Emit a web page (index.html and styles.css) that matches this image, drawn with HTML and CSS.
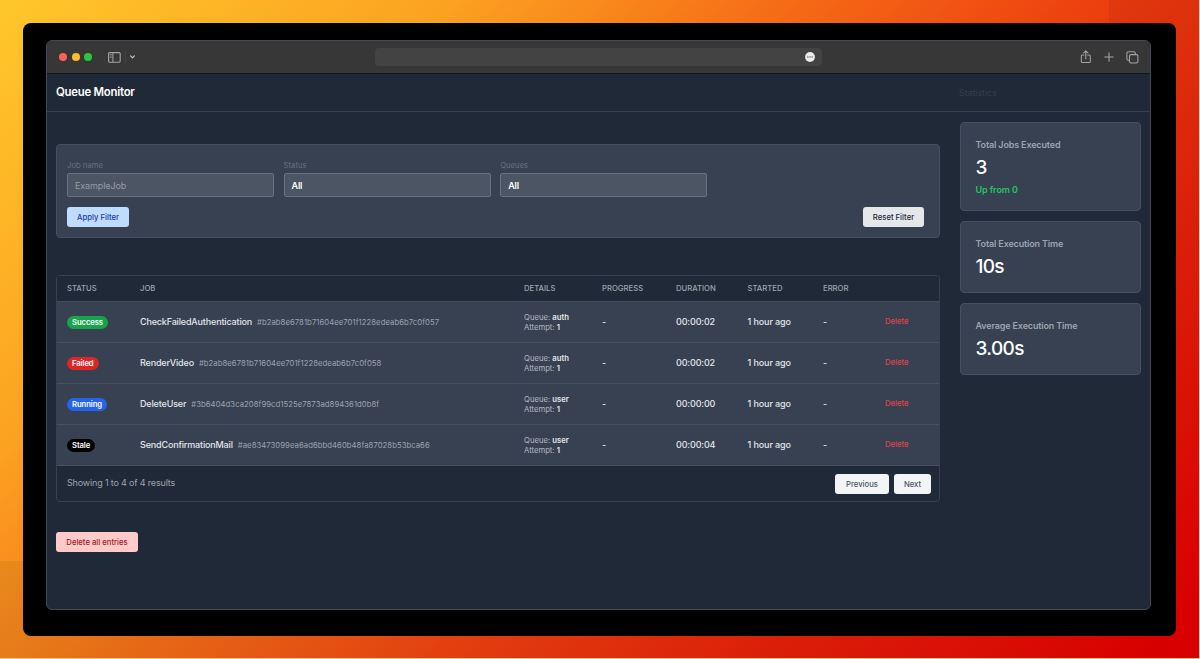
FILE: index.html
```html
<!DOCTYPE html>
<html lang="en">
<head>
<meta charset="utf-8">
<title>Queue Monitor</title>
<link rel="stylesheet" href="styles.css">
</head>
<body>
<div class="backdrop">
<div class="frame">
<div class="window">
  <div class="titlebar">
    <div class="tools-left">
      <span class="light red"></span><span class="light yellow"></span><span class="light green"></span>
      <svg class="ic-sidebar" width="13" height="11" viewBox="0 0 13 11"><rect x=".6" y=".6" width="11.6" height="9.6" rx="1.2" fill="none" stroke="#a5a5a5" stroke-width="1.1"/><path d="M4.9.6v9.6" stroke="#a5a5a5" stroke-width="1"/><path d="M1.8 2.6h1.9M1.8 4.1h1.9M1.8 5.6h1.9" stroke="#a5a5a5" stroke-width=".7"/></svg>
      <span class="divider"></span>
      <svg class="ic-chevron" width="5" height="4" viewBox="0 0 5 4"><path d="M.6.9l1.9 1.9L4.4.9" fill="none" stroke="#c5c5c5" stroke-width="1.2" stroke-linecap="round" stroke-linejoin="round"/></svg>
    </div>
    <div class="address"><svg width="10" height="10" viewBox="0 0 10 10"><circle cx="5" cy="5" r="4.9" fill="#ececec"/><circle cx="2.9" cy="5" r=".7" fill="#555"/><circle cx="5" cy="5" r=".7" fill="#555"/><circle cx="7.1" cy="5" r=".7" fill="#555"/></svg></div>
    <div class="tools-right">
      <svg width="12" height="14" viewBox="0 0 12 14"><g fill="none" stroke="#a5a5a5" stroke-width="1.05" stroke-linecap="round" stroke-linejoin="round"><path d="M4 5H2.3a1 1 0 0 0-1 1v5.5a1 1 0 0 0 1 1h7a1 1 0 0 0 1-1V6a1 1 0 0 0-1-1H7.7"/><path d="M5.8 9V1M3.7 2.9L5.8.9l2.1 2"/></g></svg>
      <svg width="10" height="10" viewBox="0 0 10 10"><path d="M5 .8v8.4M.8 5h8.4" fill="none" stroke="#a5a5a5" stroke-width="1.05" stroke-linecap="round"/></svg>
      <svg width="13" height="13" viewBox="0 0 13 13"><g fill="none" stroke="#a5a5a5" stroke-width="1.05" stroke-linejoin="round"><rect x="3.5" y="3.6" width="8.4" height="8.4" rx="1.5"/><path d="M3.4 9.2h-1A1.5 1.5 0 0 1 .9 7.7V2.3A1.5 1.5 0 0 1 2.4.8h5.4a1.5 1.5 0 0 1 1.5 1.5v1.2"/></g></svg>
    </div>
  </div>
  <div class="page">
    <header class="header"><h1 class="brand">Queue Monitor</h1><span class="stat-title">Statistics</span></header>
    <div class="content">
      <main class="main">
        <form class="filter">
          <div class="fields">
            <div class="field"><label class="label">Job name</label><div class="input hint"><span class="t-hint">ExampleJob</span></div></div>
            <div class="field"><label class="label">Status</label><div class="input"><span>All</span></div></div>
            <div class="field"><label class="label">Queues</label><div class="input"><span>All</span></div></div>
          </div>
          <div class="actions"><button type="button" class="btn apply">Apply Filter</button><button type="button" class="btn reset">Reset Filter</button></div>
        </form>
        <section class="table">
          <div class="row head"><span>STATUS</span><span>JOB</span><span>DETAILS</span><span>PROGRESS</span><span>DURATION</span><span>STARTED</span><span>ERROR</span><span></span></div>
          <div class="row"><div><span class="pill success">Success</span></div><div class="job"><span class="name">CheckFailedAuthentication</span><span class="id">#b2ab8e6781b71604ee701f1228edeab6b7c0f057</span></div><div class="details"><div>Queue: <b>auth</b></div><div>Attempt: <b>1</b></div></div><span>-</span><span>00:00:02</span><span class="ago">1 hour ago</span><span>-</span><a class="del">Delete</a></div>
          <div class="row"><div><span class="pill failed">Failed</span></div><div class="job"><span class="name">RenderVideo</span><span class="id">#b2ab8e6781b71604ee701f1228edeab6b7c0f058</span></div><div class="details"><div>Queue: <b>auth</b></div><div>Attempt: <b>1</b></div></div><span>-</span><span>00:00:02</span><span class="ago">1 hour ago</span><span>-</span><a class="del">Delete</a></div>
          <div class="row"><div><span class="pill running">Running</span></div><div class="job"><span class="name">DeleteUser</span><span class="id">#3b6404d3ca208f99cd1525e7873ad894361d0b8f</span></div><div class="details"><div>Queue: <b>user</b></div><div>Attempt: <b>1</b></div></div><span>-</span><span>00:00:00</span><span class="ago">1 hour ago</span><span>-</span><a class="del">Delete</a></div>
          <div class="row"><div><span class="pill stale">Stale</span></div><div class="job"><span class="name">SendConfirmationMail</span><span class="id">#ae83473099ea6ad6bbd460b48fa87028b53bca66</span></div><div class="details"><div>Queue: <b>user</b></div><div>Attempt: <b>1</b></div></div><span>-</span><span>00:00:04</span><span class="ago">1 hour ago</span><span>-</span><a class="del">Delete</a></div>
          <div class="footer"><span class="showing">Showing 1 to 4 of 4 results</span><div class="pager"><button class="btn page-btn prev">Previous</button><button class="btn page-btn next">Next</button></div></div>
        </section>
        <button class="btn purge">Delete all entries</button>
      </main>
      <aside class="stats">
        <div class="card tall"><div class="c-label">Total Jobs Executed</div><div class="c-value">3</div><div class="c-note">Up from 0</div></div>
        <div class="card"><div class="c-label">Total Execution Time</div><div class="c-value">10s</div></div>
        <div class="card"><div class="c-label">Average Execution Time</div><div class="c-value">3.00s</div></div>
      </aside>
    </div>
  </div>
</div>
</div>
</div>
</body>
</html>
```
FILE: styles.css
```css
* { box-sizing: border-box; }
body { margin: 0; font-family: Inter, "Liberation Sans", sans-serif; color: #e2e5ea; }
.backdrop {
  width: 1200px; height: 659px; padding: 23px 23px 22px; border-right: 1px solid #f3d5cf; border-bottom: 1px solid #f5c58a;
  background:
    linear-gradient(90deg, rgba(90,90,20,.11), rgba(150,20,10,.08) 65%, rgba(150,0,0,0)) 0 561px / 1200px 98px no-repeat,
    linear-gradient(rgba(150,20,10,.14), rgba(150,0,0,0)) 1109px 0 / 91px 561px no-repeat,
    linear-gradient(135deg, #ffc72b 0%, #fca321 24%, #f56a16 43%, #ec3c0e 61%, #e01f08 77%, #d80000 97%);
}
.frame { width: 1153px; height: 613px; background: #000; border-radius: 8px; padding: 17px 25px 26px 23px; }
.window { height: 570px; border: 1px solid #424a55; border-radius: 6px; overflow: hidden; background: #202937; }
.titlebar { display: flex; align-items: center; height: 33px; background: #373737; border-bottom: 1px solid #111820; }
.tools-left { display: flex; align-items: center; width: 327px; padding-left: 12px; }
.light { width: 8px; height: 8px; border-radius: 50%; margin-right: 4.5px; }
.red { background: #fe5f57; }
.yellow { background: #febb2e; }
.green { background: #28c840; }
.ic-sidebar { margin-left: 11px; }
.divider { width: 1px; height: 12px; background: #444; margin: 0 4px; }
.address { width: 447px; height: 18px; margin-left: 1px; border-radius: 4px; background: #434343; display: flex; align-items: center; justify-content: flex-end; padding-right: 7px; }
.tools-right { display: flex; align-items: center; margin-left: auto; gap: 12px; padding-right: 11px; }
.header { height: 38px; border-bottom: 1px solid #38414f; display: flex; align-items: center; padding: 0 0 1px 9px; }
.brand { margin: 0; width: 903px; font-size: 11.4px; font-weight: 600; color: #fff; letter-spacing: -.25px; }
.stat-title { font-size: 9px; color: #343e4c; letter-spacing: -.1px; }
.content { display: flex; justify-content: space-between; padding: 10px 9px 0; }
.main { width: 884px; padding-top: 22px; }
.stats { width: 181.5px; display: flex; flex-direction: column; gap: 10px; }
.filter, .card { background: #384152; border: 1px solid #465060; border-radius: 4px; }
.filter { height: 94px; padding: 15px 15px 0 10px; }
.fields { display: grid; grid-template-columns: repeat(3, 207px); gap: 9.6px; }
.label { display: block; height: 13px; line-height: 11px; font-size: 7.7px; color: #667080; }
.input { height: 24px; background: #4c5564; border: 1px solid #697281; border-radius: 2px; display: flex; align-items: center; padding-left: 7px; font-size: 9px; font-weight: 600; letter-spacing: -.2px; color: #fff; }
.hint { color: #949ba8; font-weight: 400; letter-spacing: -.1px; padding-top: 1px; }
.btn { border: 0; border-radius: 3px; height: 20px; padding: 0; font: 500 7.7px/20px Inter, "Liberation Sans", sans-serif; padding-top: 1px; }
.actions { display: flex; justify-content: space-between; margin-top: 10px; }
.apply { width: 62px; background: #bfdbfe; color: #1e40af; }
.reset { width: 61px; background: #e5e7eb; color: #1f2937; }
.table { margin-top: 37px; height: 227px; border: 1px solid #38414f; border-radius: 4px; overflow: hidden; }
.row { height: 41px; display: grid; grid-template-columns: 73px 384px 78px 74px 71.5px 75.5px 62px 1fr; align-items: center; padding: 0 0 1px 10px; background: #384152; border-bottom: 1px solid #465060; font-size: 9px; font-weight: 500; letter-spacing: -.13px; }
.head { height: 26px; background: #202937; font-size: 7.7px; color: #9ca3af; border-bottom-color: #434c5b; letter-spacing: 0; padding-bottom: 0; }
.pill { display: inline-block; height: 13px; line-height: 13px; padding: 0 5px; border-radius: 7px; color: #fff; font-size: 7.7px; font-weight: 600; letter-spacing: -.1px; vertical-align: middle; margin-top: 1px; }
.success { background: #16a34a; }
.failed { background: #dc2626; }
.running { background: #2563eb; }
.stale { background: #000; }
.job { display: flex; align-items: center; gap: 5px; }
.name { letter-spacing: -.16px; }
.ago { letter-spacing: -.1px; }
.id { font-size: 7.7px; font-weight: 400; color: #9ca3af; letter-spacing: .06px; padding-top: 1px; }
.details { font-size: 7.7px; line-height: 10px; font-weight: 400; color: #b2b8c2; padding-top: 2px; letter-spacing: 0; }
.details b { font-weight: 600; color: #e5e7eb; }
.del { color: #dd454a; font-size: 7.7px; letter-spacing: 0; }
.footer { display: flex; justify-content: space-between; padding: 8px 8px 0 10px; }
.showing { font-size: 9px; line-height: 17px; color: #9ca3af; letter-spacing: -.17px; }
.pager { display: flex; gap: 5px; }
.page-btn { background: #f3f4f6; color: #4b5563; padding-top: 1px; }
.prev { width: 54px; }
.next { width: 37px; }
.purge { display: block; margin-top: 30px; width: 82px; background: #fecaca; color: #991b1b; }
.card { height: 72px; padding: 16px 15px 0; }
.tall { height: 89px; }
.c-label { font-size: 9px; line-height: 12px; font-weight: 600; color: #9ca3af; letter-spacing: -.15px; }
.c-value { font-size: 19px; line-height: 24px; font-weight: 500; color: #fff; margin-top: 5px; letter-spacing: -.65px; }
.c-note { font-size: 9px; line-height: 12px; margin-top: 4px; font-weight: 600; color: #22c55e; letter-spacing: -.1px; }
```
